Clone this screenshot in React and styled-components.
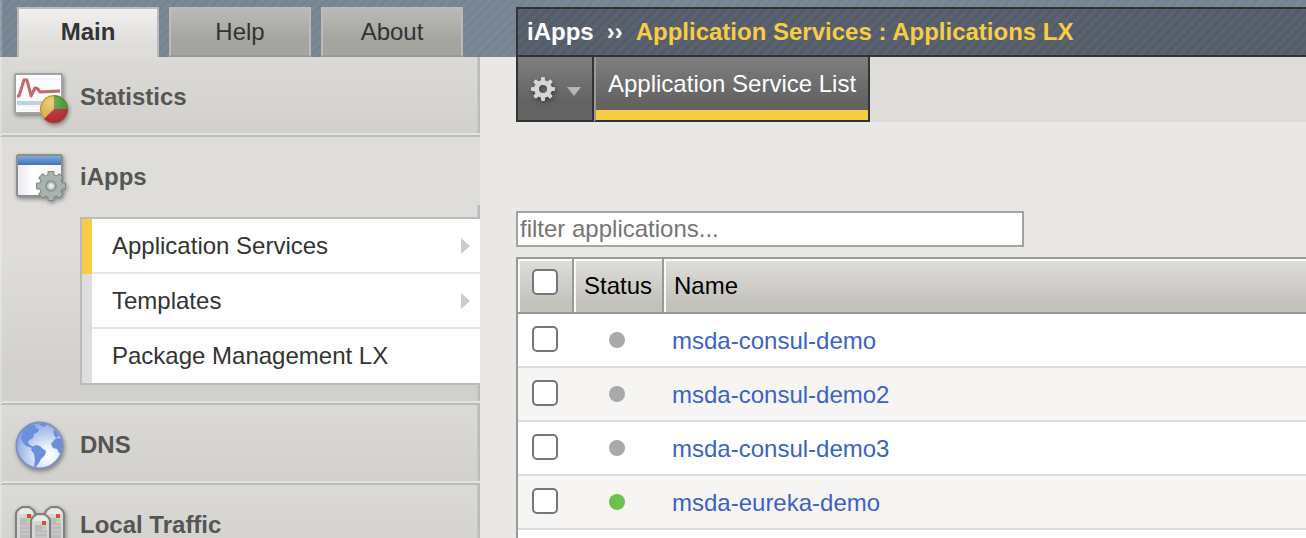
import React from "react";
import styled, { createGlobalStyle, css } from "styled-components";

const GlobalStyle = createGlobalStyle`
  *, *::before, *::after { box-sizing: border-box; }
  body {
    margin: 0;
    background: #e9e8e4;
    color: #333;
    font: 24px/28px "Liberation Sans", Arial, sans-serif;
  }
  button, input { font: inherit; }
`;

const stripes = css`
  background-image: repeating-linear-gradient(
    135deg,
    rgba(255, 255, 255, 0) 0,
    rgba(255, 255, 255, 0.05) 3px,
    rgba(255, 255, 255, 0.05) 4px,
    rgba(255, 255, 255, 0) 7px
  );
`;

const Page = styled.div`
  display: grid;
  grid-template-columns: 480px minmax(0, 1fr);
  grid-template-rows: 57px minmax(0, 1fr);
  column-gap: 36px;
  height: 100vh;
  overflow: hidden;
`;

const Banner = styled.div`
  grid-area: 1 / 1 / 2 / 3;
  background-color: #748391;
  ${stripes}
`;

const Tabs = styled.div`
  grid-area: 1 / 1;
  display: flex;
  gap: 10px;
  padding: 7px 0 0 15px;
  border-left: 2px solid rgba(255, 255, 255, 0.2);
`;

const Tab = styled.button`
  width: 142px;
  padding: 0;
  color: #333;
  border: 2px solid #bbb;
  border-bottom-color: #999;
  background: linear-gradient(#b9bab5, #a4a59f 70%);
  ${({ $active }) =>
    $active &&
    css`
      padding-bottom: 2px;
      font-weight: bold;
      border-bottom: 0;
      background: linear-gradient(#f1f0ee, #dedddA 75%);
    `}
`;

const Sidebar = styled.nav`
  grid-area: 2 / 1;
`;

const Section = styled.section`
  border-left: 2px solid rgba(255, 255, 255, 0.25);
  border-bottom: 2px solid #bbb;
  background: ${({ $open }) =>
    $open
      ? "linear-gradient(#dedddA 0 120px, #d1d0cc 240px)"
      : "linear-gradient(#dbdad6, #d1d0cc)"};
  box-shadow: inset 0 -2px #e4e3df
    ${({ $open }) => ($open ? "" : ", inset -2px 0 #bbb, inset -3px 0 #cac9c6")};
  padding-bottom: ${({ $open }) => ($open ? "0" : "10px")};
`;

const SectionLink = styled.a`
  display: flex;
  align-items: center;
  gap: 12px;
  padding: 12px 0 0 10px;
  color: #555;
  font-weight: bold;
  text-decoration: none;
  svg { display: block; flex: none; }
`;

const Submenu = styled.div`
  padding: 12px 0 18px 78px;
  box-shadow: inset 0 -2px #e4e3df, inset -2px 0 #bbb, inset -3px 0 #cac9c6;
`;

const SubmenuList = styled.ul`
  margin: 0;
  padding: 0;
  list-style: none;
  border: 2px solid #bbb;
  border-right: 0;
  background: #fff;
`;

const SubmenuLink = styled.a`
  display: flex;
  align-items: center;
  justify-content: space-between;
  height: ${({ $last }) => ($last ? "54px" : "55px")};
  padding: 0 10px ${({ $last }) => ($last ? "0" : "2px")} 20px;
  border-left: 10px solid ${({ $active }) => ($active ? "#f8cd46" : "#dedede")};
  box-shadow: ${({ $last }) => ($last ? "none" : "inset 0 -2px #e5e5e5")};
  color: #333;
  text-decoration: none;
`;

const Main = styled.main`
  grid-area: 1 / 2 / 3 / 3;
  display: flex;
  flex-direction: column;
  padding-top: 7px;
`;

const Breadcrumb = styled.header`
  display: flex;
  flex: none;
  align-items: center;
  gap: 13px;
  height: 50px;
  padding-left: 9px;
  border: 2px solid #333;
  border-right: 0;
  background-color: #525b67;
  ${stripes}
  color: #fff;
  font-weight: bold;
  white-space: nowrap;
`;

const Current = styled.span`
  color: #f8cd46;
`;

const Toolbar = styled.div`
  display: flex;
  flex: none;
  height: 65px;
  background: #dedddA;
`;

const toolbarItem = css`
  border: 0 solid #333;
  border-bottom-width: 2px;
  background: linear-gradient(#7f7f7f, #636363 70%);
`;

const GearButton = styled.button`
  ${toolbarItem}
  display: flex;
  align-items: center;
  gap: 10px;
  width: 78px;
  padding: 0 0 0 12px;
  border-width: 0 2px 2px 2px;
`;

const ToolbarTab = styled.a`
  ${toolbarItem}
  width: 276px;
  padding: 13px 0 0 12px;
  border-right-width: 2px;
  border-left: 2px solid #999;
  box-shadow: inset 0 -10px #f8cd46;
  color: #fff;
  text-decoration: none;
  white-space: nowrap;
`;

const Filter = styled.input`
  flex: none;
  width: 508px;
  height: 36px;
  margin: 89px 0 10px;
  padding: 0 2px;
  border: 2px solid #a3a3a3;
  background: #fff;
  &::placeholder { color: #757575; opacity: 1; }
`;

const Table = styled.table`
  width: 100%;
  table-layout: fixed;
  border-collapse: separate;
  border-spacing: 0;
  border: 2px solid #999;
  border-width: 2px 0 0 2px;
  background: #fff;
`;

const HeadCell = styled.th`
  width: ${({ $width }) => $width || "auto"};
  height: 55px;
  padding: ${({ $pad }) => $pad || "0"};
  border-right: ${({ $width }) => ($width ? "2px solid #999" : "0")};
  border-bottom: 2px solid #999;
  background: linear-gradient(#dfdeda, #c2c1bc 85%);
  box-shadow: inset 2px 2px #f8f8f7;
  color: #000;
  font-weight: normal;
  text-align: ${({ $align }) => $align || "center"};
`;

const Row = styled.tr`
  background: #fff;
  &:nth-child(even) { background: #f6f5f4; }
`;

const Cell = styled.td`
  height: 54px;
  padding: ${({ $pad }) => $pad || "0"};
  border-bottom: 2px solid #dedede;
`;

const Checkbox = styled.input`
  appearance: none;
  display: block;
  width: 26px;
  height: 26px;
  margin: 0 auto 0 14px;
  border: 2px solid #767676;
  border-radius: 5px;
  background: #fff;
  &:checked { background: #3c62c4; }
`;

const Dot = styled.span`
  display: block;
  width: 16px;
  height: 16px;
  margin: 0 auto 0 35px;
  border-radius: 50%;
  background: ${({ $online }) => ($online ? "#6cc24f" : "#a9a9a9")};
`;

const AppLink = styled.a`
  color: #3c62c4;
  text-decoration: none;
`;

const Filler = styled.div`
  flex: 1;
  border-left: 2px solid #999;
  background: #fff;
`;

const IconSvg = styled.svg`
  filter: drop-shadow(1px 2px 2px rgba(0, 0, 0, 0.4));
`;

function StatisticsIcon() {
  return (
    <IconSvg width="56" height="56" aria-hidden="true">
      <defs>
        <radialGradient id="pieShine" cx=".4" cy=".25" r=".8">
          <stop offset="0" stopColor="#fff" stopOpacity=".25" />
          <stop offset="1" stopColor="#000" stopOpacity=".08" />
        </radialGradient>
      </defs>
      <rect x="3" y="5" width="47" height="39" rx="1" fill="#fbfcfc" stroke="#a3a3a3" strokeWidth="2" />
      <path d="M5 37h43M5 41h43M5 10h43" stroke="#e8edf2" />
      <path d="M5 34h43" stroke="#bfd0e3" strokeWidth="4" />
      <path d="M5 27h2l5-16h3l4 16 4-8 3 1 2 3 20-1" fill="none" stroke="#c5676c" strokeWidth="3" strokeLinejoin="round" />
      <path d="M42 40V26a14 14 0 0 0-10 24z" fill="#efc54d" />
      <path d="M42 40V26a14 14 0 0 1 14 14z" fill="#51a335" />
      <path d="M42 40h14a14 14 0 0 1-24 10z" fill="#c52e39" />
      <circle cx="42" cy="40" r="13.5" fill="url(#pieShine)" stroke="#765c38" strokeOpacity=".5" />
    </IconSvg>
  );
}

function Teeth({ cx, cy, r, width, length, color }) {
  return Array.from({ length: 8 }, (_, i) => (
    <rect
      key={i}
      x={cx - width / 2}
      y={cy - r - length}
      width={width}
      height={length + 3}
      rx="1"
      fill={color}
      transform={`rotate(${i * 45} ${cx} ${cy})`}
    />
  ));
}

function IAppsIcon() {
  return (
    <IconSvg width="56" height="56" aria-hidden="true">
      <defs>
        <linearGradient id="windowBar" x2="0" y2="1">
          <stop stopColor="#80aadd" />
          <stop offset="1" stopColor="#3f74b9" />
        </linearGradient>
        <linearGradient id="windowBody">
          <stop stopColor="#e9e9ef" />
          <stop offset=".35" stopColor="#fff" />
          <stop offset="1" stopColor="#f0f0f3" />
        </linearGradient>
      </defs>
      <rect x="5" y="6" width="45" height="41" rx="2" fill="url(#windowBody)" stroke="#8c8f93" strokeWidth="2" />
      <rect x="6" y="7" width="43" height="9" fill="url(#windowBar)" />
      <Teeth cx={39} cy={37} r={10} width={7} length={5} color="#808987" />
      <circle cx="39" cy="37" r="12" fill="#808987" />
      <Teeth cx={39} cy={37} r={10} width={5} length={4} color="#a8b3b0" />
      <circle cx="39" cy="37" r="11" fill="#a8b3b0" />
      <circle cx="39" cy="37" r="5" fill="#b9c2c0" stroke="#84908d" strokeWidth="1.5" />
      <circle cx="39" cy="37" r="2.5" fill="#e7e9e8" />
    </IconSvg>
  );
}

function GlobeIcon() {
  return (
    <IconSvg width="56" height="56" aria-hidden="true">
      <defs>
        <radialGradient id="ocean" cx=".68" cy=".72" r=".72">
          <stop stopColor="#fff" />
          <stop offset=".3" stopColor="#e8effc" />
          <stop offset="1" stopColor="#8fa9e5" />
        </radialGradient>
      </defs>
      <circle cx="27.5" cy="28.5" r="23" fill="url(#ocean)" stroke="#7f91bd" strokeWidth="2" />
      <g fill="#6c8fda">
        <path d="M9 21l2-7 6-6 6 0 1 3 3 1-1 3-4 2-1 4-4 2-1 3 2 2 4 2-2 1-6-2-3-3z" />
        <path d="M20 30l4-2 4 1 3 3 3 2-1 4-4 4-2 4-4 5-1-1 1-7-1-6-3-4z" />
        <path d="M50 22l-5-1-3 2-3 4 2 4 4 1 2 4 2 0 1-6zM41 13l3 1 3 5-3 2-2-3zM27 7l6-1 2 2-4 2z" />
      </g>
    </IconSvg>
  );
}

function Server({ x, y }) {
  return (
    <g transform={`translate(${x} ${y})`}>
      <path d="M1 38V8q0-3 3-5l3-2h7l3 2q3 2 3 5v30z" fill="#d6d6d6" stroke="#80807c" strokeWidth="2" />
      <path d="M3 8q2-5 6-5h4q4 0 5 5z" fill="#e9e9e9" />
      <path d="M5 12h7v20H5zM12 17h5v15h-5z" fill="#bbb" />
      <path d="M5 20h12M5 24h12M5 28h12" stroke="#cfcfcf" />
      <rect x="12" y="8" width="4" height="4" fill="#df4545" />
      <rect x="12" y="13" width="4" height="3" fill="#98e878" />
    </g>
  );
}

function ServersIcon() {
  return (
    <IconSvg width="56" height="56" aria-hidden="true">
      <Server x={3} y={9} />
      <Server x={32} y={9} />
      <Server x={18} y={16} />
    </IconSvg>
  );
}

function GearIcon() {
  return (
    <IconSvg width="26" height="26" aria-hidden="true">
      <Teeth cx={13} cy={13} r={8} width={4} length={4} color="#d6d6d6" />
      <circle cx="13" cy="13" r="6.5" fill="none" stroke="#d6d6d6" strokeWidth="5" />
    </IconSvg>
  );
}

function MenuArrow() {
  return (
    <svg width="16" height="14" aria-hidden="true">
      <path d="M1 5h14L8 14z" fill="#b5b5b5" />
    </svg>
  );
}

function SubmenuArrow() {
  return (
    <svg width="9" height="16" aria-hidden="true">
      <path d="M0 0l9 8-9 8z" fill="#ccc" />
    </svg>
  );
}

const submenu = [
  { label: "Application Services", active: true, more: true },
  { label: "Templates", more: true },
  { label: "Package Management LX" },
];

const applications = [
  { name: "msda-consul-demo" },
  { name: "msda-consul-demo2" },
  { name: "msda-consul-demo3" },
  { name: "msda-eureka-demo", online: true },
];

function NavSection({ icon, label, children }) {
  return (
    <Section $open={Boolean(children)}>
      <SectionLink href="#">
        {icon}
        {label}
      </SectionLink>
      {children}
    </Section>
  );
}

export default function App() {
  return (
    <>
      <GlobalStyle />
      <Page>
        <Banner />
        <Tabs>
          <Tab $active>Main</Tab>
          <Tab>Help</Tab>
          <Tab>About</Tab>
        </Tabs>
        <Sidebar>
          <NavSection icon={<StatisticsIcon />} label="Statistics" />
          <NavSection icon={<IAppsIcon />} label="iApps">
            <Submenu>
              <SubmenuList>
                {submenu.map(({ label, active, more }, i) => (
                  <li key={label}>
                    <SubmenuLink href="#" $active={active} $last={i === submenu.length - 1}>
                      {label}
                      {more && <SubmenuArrow />}
                    </SubmenuLink>
                  </li>
                ))}
              </SubmenuList>
            </Submenu>
          </NavSection>
          <NavSection icon={<GlobeIcon />} label="DNS" />
          <NavSection icon={<ServersIcon />} label="Local Traffic" />
        </Sidebar>
        <Main>
          <Breadcrumb>
            <span>iApps</span>
            <span>››</span>
            <Current>Application Services : Applications LX</Current>
          </Breadcrumb>
          <Toolbar>
            <GearButton aria-label="Settings">
              <GearIcon />
              <MenuArrow />
            </GearButton>
            <ToolbarTab href="#">Application Service List</ToolbarTab>
          </Toolbar>
          <Filter type="text" aria-label="Filter applications" placeholder="filter applications..." />
          <Table>
            <thead>
              <tr>
                <HeadCell $width="56px" $pad="0 0 8px">
                  <Checkbox type="checkbox" aria-label="Select all" />
                </HeadCell>
                <HeadCell $width="90px">Status</HeadCell>
                <HeadCell $align="left" $pad="0 10px">Name</HeadCell>
              </tr>
            </thead>
            <tbody>
              {applications.map(({ name, online }) => (
                <Row key={name}>
                  <Cell $pad="0 0 2px">
                    <Checkbox type="checkbox" aria-label={`Select ${name}`} />
                  </Cell>
                  <Cell>
                    <Dot $online={online} />
                  </Cell>
                  <Cell $pad="2px 8px 0">
                    <AppLink href="#">{name}</AppLink>
                  </Cell>
                </Row>
              ))}
            </tbody>
          </Table>
          <Filler />
        </Main>
      </Page>
    </>
  );
}
